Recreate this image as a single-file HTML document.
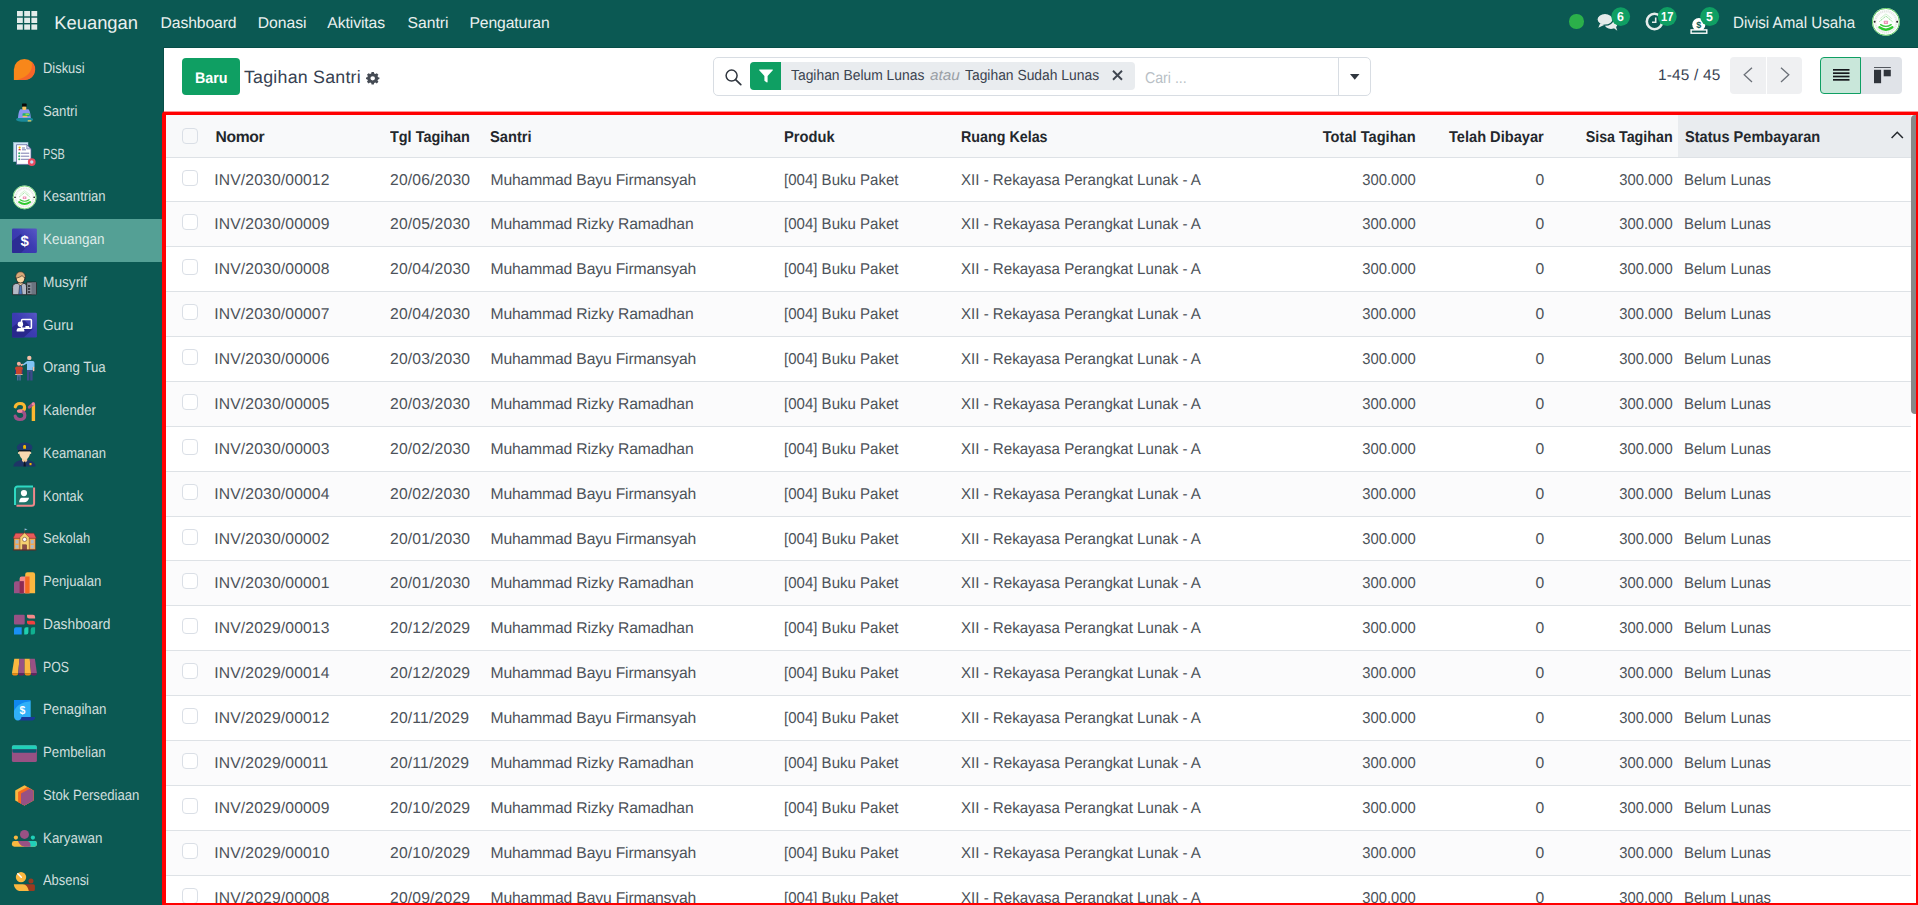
<!DOCTYPE html>
<html lang="id">
<head>
<meta charset="utf-8">
<title>Tagihan Santri - Keuangan</title>
<style>
*{box-sizing:border-box}
html,body{margin:0;padding:0}
body{width:1918px;height:905px;overflow:hidden;position:relative;background:#fff;font-family:"Liberation Sans",sans-serif;}
.t{position:absolute;white-space:nowrap;line-height:1;display:block;text-rendering:geometricPrecision}
.abs{position:absolute}
nav.top{position:absolute;left:0;top:0;width:1918px;height:48px;background:#0b5953}
.sidebg{position:absolute;left:0;top:48px;width:164px;height:857px;background:#0b5953;border-right:1px solid #074e48}
.act{position:absolute;left:0;top:219px;width:162px;height:43px;background:#54a095}
.mainbg{position:absolute;left:164px;top:48px;width:1754px;height:857px;background:#fff}
a{color:inherit;text-decoration:none}
.cb{position:absolute;left:182px;width:16px;height:16px;border:1px solid #dadfe6;border-radius:4px;background:#fff}
svg{position:absolute;overflow:visible}
</style>
</head>
<body>

<nav class="top">
<svg style="left:17px;top:11px" width="20" height="19" viewBox="0 0 20 19">
<rect x="0.0" y="0.0" width="5.8" height="5.3" fill="#e4ecea"/>
<rect x="7.2" y="0.0" width="5.8" height="5.3" fill="#e4ecea"/>
<rect x="14.4" y="0.0" width="5.8" height="5.3" fill="#e4ecea"/>
<rect x="0.0" y="6.7" width="5.8" height="5.3" fill="#e4ecea"/>
<rect x="7.2" y="6.7" width="5.8" height="5.3" fill="#e4ecea"/>
<rect x="14.4" y="6.7" width="5.8" height="5.3" fill="#e4ecea"/>
<rect x="0.0" y="13.4" width="5.8" height="5.3" fill="#e4ecea"/>
<rect x="7.2" y="13.4" width="5.8" height="5.3" fill="#e4ecea"/>
<rect x="14.4" y="13.4" width="5.8" height="5.3" fill="#e4ecea"/>
</svg>
<span class="t" id="brand" style="top:14.00px;font-size:18.4px;color:#e9f0ef;left:54.20px;">Keuangan</span>
<span class="t" id="menu0" style="top:16.00px;font-size:15.7px;color:#e9f0ef;letter-spacing:-0.100px;left:160.60px;">Dashboard</span>
<span class="t" id="menu1" style="top:16.00px;font-size:15.7px;color:#e9f0ef;left:257.70px;">Donasi</span>
<span class="t" id="menu2" style="top:16.00px;font-size:15.7px;color:#e9f0ef;letter-spacing:-0.075px;left:327.30px;">Aktivitas</span>
<span class="t" id="menu3" style="top:16.00px;font-size:15.7px;color:#e9f0ef;left:407.50px;">Santri</span>
<span class="t" id="menu4" style="top:16.00px;font-size:15.7px;color:#e9f0ef;letter-spacing:-0.111px;left:469.50px;">Pengaturan</span>
<div class="abs" style="left:1569px;top:14px;width:14.5px;height:14.5px;border-radius:50%;background:#2bb04a"></div>
<svg style="left:1590px;top:0" width="140" height="48" viewBox="1590 0 140 48">
<g fill="#e6eceb">
<ellipse cx="1611" cy="24.200" rx="6.400" ry="4.700"/><path d="M1613 27.600l4.300 3.100-1.400-4.200z"/>
<ellipse cx="1605" cy="19.300" rx="8.100" ry="5.900" stroke="#0b5953" stroke-width="1.300"/>
<path d="M1600.200 23.200l-1.900 4.600 6.400-3z"/>
</g>
<circle cx="1654.500" cy="21.500" r="7.700" fill="none" stroke="#e6eceb" stroke-width="2.600"/>
<path d="M1655.700 17.400v5.600M1652 22.300h4.500" fill="none" stroke="#e6eceb" stroke-width="1.600"/>
<circle cx="1698.800" cy="24.600" r="6.600" fill="#fff"/>
<rect x="1691.100" y="29.900" width="15.700" height="3.300" fill="#0b5953" stroke="#fff" stroke-width="1.400"/>
<g fill="#0f9f63"><circle cx="1620.700" cy="16.600" r="9.400"/><circle cx="1667.200" cy="16.600" r="9.500"/><circle cx="1709.700" cy="16.600" r="9.500"/></g>
</svg>
<span class="t" id="money_s" style="top:21.00px;font-size:9px;color:#0b5953;font-weight:700;left:1696.30px;">$</span>
<span class="t" id="b1t" style="top:10.00px;font-size:13px;color:#fff;font-weight:700;left:1617.00px;transform:scaleX(0.9500);transform-origin:0 0;">6</span>
<span class="t" id="b2t" style="top:10.00px;font-size:13px;color:#fff;font-weight:700;left:1660.60px;transform:scaleX(0.8600);transform-origin:0 0;">17</span>
<span class="t" id="b3t" style="top:10.00px;font-size:13px;color:#fff;font-weight:700;left:1706.20px;transform:scaleX(0.9500);transform-origin:0 0;">5</span>
<span class="t" id="user" style="top:15.00px;font-size:16.2px;color:#e9f0ef;left:1733.30px;transform:scaleX(0.9359);transform-origin:0 0;">Divisi Amal Usaha</span>
<svg style="left:1866px;top:0" width="44" height="48" viewBox="1866 0 44 48"><g transform="translate(1885.9 21.9) scale(1.0000)">
<circle r="13.900" fill="#fdfefd"/>
<circle r="13.500" fill="none" stroke="#52c852" stroke-width=".9"/>
<circle r="10.600" fill="none" stroke="#e4e6e4" stroke-width="2.200" stroke-dasharray="1.200 .7"/>
<path d="M-6.600 -.2L0 -5.800 6.600 -.2" fill="none" stroke="#8edc8e" stroke-width="1" stroke-dasharray="1.500 .6"/>
<path d="M-5.800 -3.300L0 -8 5.800 -3.300" fill="none" stroke="#c4ecc4" stroke-width=".8"/>
<rect x="-2.100" y="-1.200" width="4.200" height="3.200" rx=".5" fill="#ee92b6"/>
<rect x="-.5" y="-.2" width="1" height="1.300" fill="#fff"/>
<path d="M-5.300 2.700Q0 6.400 5.300 2.700" fill="none" stroke="#3cc83c" stroke-width="1.300" stroke-linecap="round"/>
<path d="M-6.500 5.400Q0 10.200 6.500 5.400" fill="none" stroke="#2ec82e" stroke-width="2.300" stroke-linecap="round"/>
<circle cx="-11.300" cy="-.2" r="1" fill="#222"/><circle cx="11.300" cy="-.2" r="1" fill="#222"/>
</g></svg>
<div class="abs" style="left:163px;top:47px;width:1755px;height:1px;background:#074e48"></div>
</nav>
<aside class="side">
<div class="sidebg"></div>
<div class="act"></div>
<ul style="list-style:none;margin:0;padding:0">
<li><a><svg style="left:12px;top:56.87px" width="25" height="25" viewBox="0 0 25 25"><path fill="#f8871a" d="M1.900 23V12.450A10.550 10.550 0 1 1 12.450 23z"/>
<path fill="#f5652a" d="M19.600 4.600Q22.300 18.300 5 22.900L12.450 23A10.550 10.550 0 0 0 19.600 4.600z"/></svg><span class="t" id="side0" style="top:62.00px;font-size:14.8px;color:rgba(255,255,255,.82);left:43.40px;transform:scaleX(0.8723);transform-origin:0 0;">Diskusi</span></a></li>
<li><a><svg style="left:12px;top:99.61px" width="25" height="25" viewBox="0 0 25 25"><ellipse cx="12.600" cy="19.500" rx="8.600" ry="2.300" fill="#1a8a9a"/>
<path fill="#8a96f0" d="M8.600 9.200h7.600c1.500.6 2.300 4.500 2.600 8.700H6c.3-4.200 1.100-8.100 2.600-8.700z"/>
<rect x="10.300" y="6.200" width="4" height="3.900" rx="1.300" fill="#f5c060"/>
<rect x="10" y="3.600" width="4.600" height="3" rx=".6" fill="#0a0a0a"/>
<rect x="10.500" y="13.300" width="7.300" height="3" rx=".8" fill="#20b070"/>
<rect x="13.500" y="13.600" width="3.500" height="1.200" fill="#b8e04a"/>
<rect x="10.500" y="15.800" width="5" height="1.500" rx=".7" fill="#f5c060"/>
<rect x="15.600" y="20.300" width="3.800" height="1.100" rx=".5" fill="#e8d060"/></svg><span class="t" id="side1" style="top:105.00px;font-size:14.8px;color:rgba(255,255,255,.82);left:43.40px;transform:scaleX(0.8895);transform-origin:0 0;">Santri</span></a></li>
<li><a><svg style="left:12px;top:142.35px" width="25" height="25" viewBox="0 0 25 25"><rect x="1.400" y=".3" width="14.600" height="19.400" fill="#cfe6f5" stroke="#9ab8d0" stroke-width=".5"/>
<path fill="#fff" stroke="#5a5a9a" stroke-width=".7" d="M4.500 2.700h10.300l4.200 4.200v15.500H4.500z"/>
<path fill="#d8dcf0" stroke="#5a5a9a" stroke-width=".6" d="M14.800 2.700v4.200H19z"/>
<circle cx="7.600" cy="5.600" r="1.100" fill="#f0b000"/><path d="M6.300 8.300c0-1.800 2.600-1.800 2.600 0z" fill="#c03050"/>
<path stroke="#5a5a9a" stroke-width=".8" d="M10 6h3M10 7.800h4M8.800 11.200h8.400M8.800 14.200h8.400M8.800 17.300h8.400"/>
<circle cx="7.200" cy="11.200" r="1" fill="#30b070"/><circle cx="7.200" cy="14.200" r="1" fill="#30b070"/><circle cx="7.200" cy="17.300" r="1" fill="#30b070"/>
<circle cx="19.750" cy="20.050" r="3.900" fill="#e84a5f"/><circle cx="19.750" cy="20.050" r="1.700" fill="#c8d8f0"/></svg><span class="t" id="side2" style="top:148.00px;font-size:14.8px;color:rgba(255,255,255,.82);left:43.40px;transform:scaleX(0.7389);transform-origin:0 0;">PSB</span></a></li>
<li><a><svg style="left:12px;top:185.09px" width="25" height="25" viewBox="0 0 25 25"><g transform="translate(12.6 12.4) scale(0.8489)">
<circle r="13.900" fill="#fdfefd"/>
<circle r="13.500" fill="none" stroke="#52c852" stroke-width=".9"/>
<circle r="10.600" fill="none" stroke="#e4e6e4" stroke-width="2.200" stroke-dasharray="1.200 .7"/>
<path d="M-6.600 -.2L0 -5.800 6.600 -.2" fill="none" stroke="#8edc8e" stroke-width="1" stroke-dasharray="1.500 .6"/>
<path d="M-5.800 -3.300L0 -8 5.800 -3.300" fill="none" stroke="#c4ecc4" stroke-width=".8"/>
<rect x="-2.100" y="-1.200" width="4.200" height="3.200" rx=".5" fill="#ee92b6"/>
<rect x="-.5" y="-.2" width="1" height="1.300" fill="#fff"/>
<path d="M-5.300 2.700Q0 6.400 5.300 2.700" fill="none" stroke="#3cc83c" stroke-width="1.300" stroke-linecap="round"/>
<path d="M-6.500 5.400Q0 10.200 6.500 5.400" fill="none" stroke="#2ec82e" stroke-width="2.300" stroke-linecap="round"/>
<circle cx="-11.300" cy="-.2" r="1" fill="#222"/><circle cx="11.300" cy="-.2" r="1" fill="#222"/>
</g></svg><span class="t" id="side3" style="top:190.00px;font-size:14.8px;color:rgba(255,255,255,.82);left:43.40px;transform:scaleX(0.8857);transform-origin:0 0;">Kesantrian</span></a></li>
<li><a><svg style="left:12px;top:227.83px" width="25" height="25" viewBox="0 0 25 25"><defs><linearGradient id="gq4" x1="1" y1="0" x2="0" y2="1"><stop offset="0" stop-color="#5858c6"/><stop offset=".45" stop-color="#3c3cb2"/><stop offset="1" stop-color="#3434a8"/></linearGradient></defs>
<rect x="0" y=".4" width="24.900" height="24.600" rx="1.200" fill="url(#gq4)"/><path d="M0 13l9-7 7.500 11L9 25H1.200A1.200 1.200 0 0 1 0 23.800z" fill="#2c2c94"/>
<text x="12.600" y="17.800" text-anchor="middle" font-family="Liberation Sans, sans-serif" font-weight="700" font-size="15" fill="#fff">$</text></svg><span class="t" id="side4" style="top:233.00px;font-size:14.8px;color:rgba(255,255,255,.82);left:43.40px;transform:scaleX(0.9107);transform-origin:0 0;">Keuangan</span></a></li>
<li><a><svg style="left:12px;top:270.57px" width="25" height="25" viewBox="0 0 25 25"><rect x="14.700" y="11.100" width="9.800" height="12.600" rx=".8" fill="#8a919c" stroke="#1c1c1c" stroke-width=".8"/>
<rect x="19.500" y="11.500" width="4.600" height="11.800" fill="#6c7480"/>
<rect x="16" y="14" width="2.200" height="2" fill="#3a3e46"/><rect x="16" y="17" width="2.200" height="2" fill="#3a3e46"/><rect x="16" y="20" width="2.200" height="2" fill="#3a3e46"/>
<path d="M.6 23.700v-7.500c0-2.500 1.800-3.700 4.500-3.900h6.800c1.800.2 2.600 1.400 2.600 3.900v7.500z" fill="#b4b9c6" stroke="#1c1c1c" stroke-width=".8"/>
<path d="M6 12.600l2.500 2.200 2.500-2.200v-1.500H6z" fill="#f3cf9c" stroke="#1c1c1c" stroke-width=".6"/>
<path d="M7.600 14.600h1.800l.9 8.800H6.700z" fill="#4a78c0" stroke="#1c1c1c" stroke-width=".5"/>
<ellipse cx="8.500" cy="7.300" rx="4.300" ry="4.700" fill="#f9d5a0" stroke="#1c1c1c" stroke-width=".8"/>
<path d="M3.700 7.200C3.300 2.600 6 .8 8.500.8s5.300 1.800 4.800 6.400c-1.400-.9-2.600-1.700-3.300-2.600C8.500 6 6 6.800 3.700 7.200z" fill="#d8a878" stroke="#1c1c1c" stroke-width=".6"/></svg><span class="t" id="side5" style="top:276.00px;font-size:14.8px;color:rgba(255,255,255,.82);left:43.40px;transform:scaleX(0.9250);transform-origin:0 0;">Musyrif</span></a></li>
<li><a><svg style="left:12px;top:313.31px" width="25" height="25" viewBox="0 0 25 25"><defs><linearGradient id="gq6" x1="1" y1="0" x2="0" y2="1"><stop offset="0" stop-color="#5858c6"/><stop offset=".45" stop-color="#3c3cb2"/><stop offset="1" stop-color="#3434a8"/></linearGradient></defs>
<rect x="0" y="-.2" width="24.900" height="24.600" rx="1.200" fill="url(#gq6)"/><path d="M0 14.500L11 5.500l9.500 10.800-8.800 8.300H1.200A1.200 1.200 0 0 1 0 23.400z" fill="#28288c"/>
<rect x="9.600" y="6.500" width="9.800" height="8.800" rx=".8" fill="none" stroke="#fff" stroke-width="1.500"/>
<rect x="13.400" y="13" width="3.800" height="2.300" fill="#fff"/>
<circle cx="8.400" cy="11.200" r="2.700" fill="#fff"/>
<path d="M4.700 18.500v-1.200c0-1.700 1.400-2.500 3.700-2.500s3.900.8 3.900 2.500v1.200z" fill="#fff"/></svg><span class="t" id="side6" style="top:319.00px;font-size:14.8px;color:rgba(255,255,255,.82);left:43.40px;transform:scaleX(0.9219);transform-origin:0 0;">Guru</span></a></li>
<li><a><svg style="left:12px;top:356.05px" width="25" height="25" viewBox="0 0 25 25"><circle cx="17.300" cy="1.900" r="2.200" fill="#f5c0a8"/>
<path d="M15 14.300V5h5.600c1.200 0 1.900.8 1.900 1.900v4.300h-1.700v3.100z" fill="#7fc4f5"/>
<path d="M15.200 5l-4.700 3.400.8 1.200 4.800-2.600z" fill="#7fc4f5"/>
<rect x="20.900" y="10.800" width="1.500" height="4.500" rx=".7" fill="#f5c0a8"/>
<path d="M15 14.300h5.600v10.300h-2.400v-8.500h-.8v8.500H15z" fill="#3e4a8a"/>
<circle cx="6.900" cy="7.800" r="2" fill="#f5b0a0"/>
<path d="M8.500 8.300l2.200-.5.500 1.200-2.200 1.300z" fill="#f5b0a0"/>
<rect x="3" y="10.400" width="7.800" height="7.500" rx="2" fill="#c8442e"/>
<rect x="3" y="13.500" width="1" height="4.500" fill="#2e3a7a"/><rect x="9.800" y="13.500" width="1" height="4.500" fill="#2e3a7a"/>
<rect x="3.200" y="18" width="7.400" height="1" fill="#e0b890"/>
<path d="M5 18.800h3.800v5.800H7.300v-4h-.8v4H5z" fill="#4a6a9a"/></svg><span class="t" id="side7" style="top:361.00px;font-size:14.8px;color:rgba(255,255,255,.82);left:43.40px;transform:scaleX(0.8957);transform-origin:0 0;">Orang Tua</span></a></li>
<li><a><svg style="left:12px;top:398.79px" width="25" height="25" viewBox="0 0 25 25"><path d="M3.300 7.800C3.900 5.200 5.700 4.500 8 4.500c3 0 4.600 1.700 4.600 4 0 2.200-1.700 3.600-4.200 3.600" fill="none" stroke="#fbb830" stroke-width="3.200" stroke-linecap="round"/>
<path d="M7.500 12.100c3.200 0 5.300 1.500 5.300 4.200 0 2.600-2 4.200-4.900 4.200-2.600 0-4.200-1.200-4.700-3.400" fill="none" stroke="#9c5188" stroke-width="3.200" stroke-linecap="round"/>
<path d="M6.500 12.100h2.500" stroke="#f08a98" stroke-width="3.200" stroke-linecap="round"/>
<path d="M21.400 4.800V22" stroke="#fbb830" stroke-width="3.400" stroke-linecap="butt"/>
<path d="M17.300 8.200l4.200-3.500" stroke="#9c5188" stroke-width="3" stroke-linecap="round"/>
<circle cx="21.300" cy="4.900" r="1.600" fill="#f08a98"/></svg><span class="t" id="side8" style="top:404.00px;font-size:14.8px;color:rgba(255,255,255,.82);left:43.40px;transform:scaleX(0.8932);transform-origin:0 0;">Kalender</span></a></li>
<li><a><svg style="left:12px;top:441.53px" width="25" height="25" viewBox="0 0 25 25"><path d="M1.400 24.400c.3-3.800 3.300-5.300 7.600-6.400h7.200c4.300 1.100 7 2.600 7.400 6.400z" fill="#1e3566"/>
<path d="M10 15.500h5.200V19l-2.600 2-2.600-2z" fill="#f3c998"/>
<path d="M12 19.500h1.300l.5 4.900h-2.300z" fill="#101828"/>
<rect x="17.500" y="21" width="2" height="2.200" fill="#f5b800"/>
<path d="M7 9c0 5 2.500 8.800 5.600 8.800S18.300 14 18.300 9z" fill="#f9d9b0"/>
<circle cx="6.900" cy="11" r="1" fill="#f9d9b0"/><circle cx="18.300" cy="11" r="1" fill="#f9d9b0"/>
<path d="M6.200 9.400h12.800v-1.300H6.200z" fill="#0a0a10"/>
<path d="M5 6.500C4 3.500 8 .5 12.600.5s8.600 3 7.600 6L19 8.300H6.200z" fill="#1e3a6e"/>
<path d="M11.200 6.800V4.300c0-1.700 2.800-1.700 2.800 0v2.500z" fill="#f5b800"/></svg><span class="t" id="side9" style="top:447.00px;font-size:14.8px;color:rgba(255,255,255,.82);left:43.40px;transform:scaleX(0.8818);transform-origin:0 0;">Keamanan</span></a></li>
<li><a><svg style="left:12px;top:484.27px" width="25" height="25" viewBox="0 0 25 25"><rect x="3" y="2.500" width="19.100" height="19.200" rx="2.500" fill="#1d7268"/>
<path d="M3 21V5a2.500 2.500 0 0 1 2.500-2.500H21" fill="none" stroke="#2ed9c3" stroke-width="2"/>
<path d="M22.100 3.500v15.700a2.500 2.500 0 0 1-2.500 2.500H4.500" fill="none" stroke="#f0878a" stroke-width="2"/>
<circle cx="11.950" cy="9.100" r="3.100" fill="#fff"/>
<path d="M9.500 13.700h7.600c-.5 2.500-2.300 4.500-5 4.500h-5c.3-2.500 1-4 2.400-4.500z" fill="#fff"/></svg><span class="t" id="side10" style="top:490.00px;font-size:14.8px;color:rgba(255,255,255,.82);left:43.40px;transform:scaleX(0.8743);transform-origin:0 0;">Kontak</span></a></li>
<li><a><svg style="left:12px;top:527.01px" width="25" height="25" viewBox="0 0 25 25"><path d="M12.500 1.500V6" stroke="#6a4a3a" stroke-width=".6"/><path d="M12.700 1.400l2.800.9-2.800 1.100z" fill="#8ac0e0"/>
<rect x="2" y="11" width="21.400" height="11.900" fill="#f0a850" stroke="#6a3a2a" stroke-width=".5"/>
<path d="M1.100 11.300l2.400-5.100h18.400l2.400 5.100z" fill="#e85a5a" stroke="#7a2a2a" stroke-width=".5"/>
<path d="M7.900 22.900V10.500l4.700-4.800 4.700 4.800v12.400z" fill="#f5d070" stroke="#6a3a2a" stroke-width=".5"/>
<circle cx="12.600" cy="12.400" r="2.100" fill="#fff" stroke="#6a3a2a" stroke-width=".6"/>
<rect x="10.500" y="17.800" width="4.200" height="5.100" fill="#8a4a4a" stroke="#5a2a2a" stroke-width=".4"/>
<rect x="3.500" y="13" width="3" height="3.600" fill="#a8b8c8"/><rect x="3.500" y="18" width="3" height="3.400" fill="#a8b8c8"/>
<rect x="18.700" y="13" width="3" height="3.600" fill="#a8b8c8"/><rect x="18.700" y="18" width="3" height="3.400" fill="#a8b8c8"/>
<path d="M.8 23h23.600" stroke="#5a2a2a" stroke-width=".9"/></svg><span class="t" id="side11" style="top:532.00px;font-size:14.8px;color:rgba(255,255,255,.82);left:43.40px;transform:scaleX(0.8830);transform-origin:0 0;">Sekolah</span></a></li>
<li><a><svg style="left:12px;top:569.75px" width="25" height="25" viewBox="0 0 25 25"><path d="M13.200 23.250V4.500a2.200 2.200 0 0 1 2.200-2.250h5.500a2.200 2.200 0 0 1 2.200 2.200v18.800z" fill="#fbb840"/>
<path d="M7.600 23.250V8.700a2.100 2.100 0 0 1 2.100-2.150h7.800v16.700z" fill="#f58a8a"/>
<path d="M13.200 6.550h4.300v16.700h-4.300z" fill="#f56a20"/>
<path d="M2 23.250V13.400a2.100 2.100 0 0 1 2.100-2.150h7.700v12z" fill="#985184"/>
<path d="M7.600 11.250h4.200v12H7.600z" fill="#8e2a52"/></svg><span class="t" id="side12" style="top:575.00px;font-size:14.8px;color:rgba(255,255,255,.82);left:43.40px;transform:scaleX(0.8877);transform-origin:0 0;">Penjualan</span></a></li>
<li><a><svg style="left:12px;top:612.49px" width="25" height="25" viewBox="0 0 25 25"><rect x="2" y="2.800" width="10.700" height="9.700" rx="1" fill="#985184"/>
<path d="M15 2.800h6a2.100 2.100 0 0 1 2.100 2.100v1.600h-6A2.100 2.100 0 0 1 15 4.400z" fill="#f58a8a"/>
<path d="M15 8.650h6a2.100 2.100 0 0 1 2.100 2.100v1.750h-6A2.100 2.100 0 0 1 15 10.400z" fill="#f04040"/>
<path d="M2 17.300a2 2 0 0 1 2-2h5.700v7.200H2z" fill="#1a90f5"/>
<path d="M12.200 22.500v-5a2.200 2.200 0 0 1 2.200-2.200h2v5a2.200 2.200 0 0 1-2.200 2.200z" fill="#20d0b0"/>
<path d="M18.700 22.500v-5a2.200 2.200 0 0 1 2.200-2.200h2.200v5a2.200 2.200 0 0 1-2.200 2.200z" fill="#10b090"/></svg><span class="t" id="side13" style="top:618.00px;font-size:14.8px;color:rgba(255,255,255,.82);left:43.40px;transform:scaleX(0.9310);transform-origin:0 0;">Dashboard</span></a></li>
<li><a><svg style="left:12px;top:655.23px" width="25" height="25" viewBox="0 0 25 25"><path d="M2.300 3.700h5.150L6.200 18.200H-.1z" fill="#fbb840"/><path d="M7.450 3.700h5.150v14.500H6.200z" fill="#985184"/>
<path d="M12.600 3.700h5.150L19 18.200h-6.400z" fill="#fbb840"/><path d="M17.750 3.700h5.150l2 14.500H19z" fill="#985184"/>
<path d="M-.1 18.200h6.300a3.150 2.300 0 0 1-6.300 0z" fill="#f58a10"/><path d="M6.200 18.200h6.400a3.200 2.300 0 0 1-6.400 0z" fill="#6a2060"/>
<path d="M12.600 18.200H19a3.200 2.300 0 0 1-6.400 0z" fill="#f58a10"/><path d="M19 18.200h5.900a2.950 2.300 0 0 1-5.900 0z" fill="#6a2060"/></svg><span class="t" id="side14" style="top:661.00px;font-size:14.8px;color:rgba(255,255,255,.82);left:43.40px;transform:scaleX(0.8290);transform-origin:0 0;">POS</span></a></li>
<li><a><svg style="left:12px;top:697.97px" width="25" height="25" viewBox="0 0 25 25"><path d="M9 19h14.100c0 2-1.200 3.600-3 3.600H6z" fill="#1a3a9a"/>
<path d="M2 2h15.200a1.500 1.500 0 0 1 1.500 1.500V19H9.500c-.3 2.200-1.700 3.600-3.700 3.600-2.200 0-3.800-1.700-3.800-4z" fill="#30b0f8"/>
<path d="M2 2h15.200a1.500 1.500 0 0 1 1.500 1.300C10 4 4 8 2 13z" fill="#1088f0"/>
<text x="10.400" y="16.300" text-anchor="middle" font-family="Liberation Sans, sans-serif" font-weight="700" font-size="10.500" fill="#fff">$</text></svg><span class="t" id="side15" style="top:703.00px;font-size:14.8px;color:rgba(255,255,255,.82);left:43.40px;transform:scaleX(0.8971);transform-origin:0 0;">Penagihan</span></a></li>
<li><a><svg style="left:12px;top:740.71px" width="25" height="25" viewBox="0 0 25 25"><rect x="-.1" y="4.300" width="25" height="16.700" rx="1.600" fill="#985184"/>
<path d="M-.1 8.300V5.900a1.600 1.600 0 0 1 1.600-1.600h21.800a1.600 1.600 0 0 1 1.600 1.600v2.400z" fill="#20d0b8"/>
<path d="M.4 8.300h24v2a1.500 1.500 0 0 1-1.500 1.500H1.900a1.500 1.500 0 0 1-1.500-1.500z" fill="#0a5a70"/></svg><span class="t" id="side16" style="top:746.00px;font-size:14.8px;color:rgba(255,255,255,.82);left:43.40px;transform:scaleX(0.8957);transform-origin:0 0;">Pembelian</span></a></li>
<li><a><svg style="left:12px;top:783.45px" width="25" height="25" viewBox="0 0 25 25"><path d="M12.500 2.350l9 5.200v10l-9 5-9.300-5v-10z" fill="#fbb840"/>
<path d="M6.100 9l9.300-5 6.100 3.550v10l-9 5-6.400-3.400z" fill="#f56a20"/>
<path d="M9 10.550l8.800-4.800 3.700 2v9.800l-9 5-3.500-1.900z" fill="#985184"/></svg><span class="t" id="side17" style="top:789.00px;font-size:14.8px;color:rgba(255,255,255,.82);left:43.40px;transform:scaleX(0.8870);transform-origin:0 0;">Stok Persediaan</span></a></li>
<li><a><svg style="left:12px;top:826.19px" width="25" height="25" viewBox="0 0 25 25"><circle cx="12.500" cy="8.400" r="4.500" fill="#985184"/>
<circle cx="3.900" cy="11.600" r="2.100" fill="#fbb840"/><circle cx="20.900" cy="11.600" r="2.100" fill="#20d0b8"/>
<rect x="-.1" y="15.100" width="25" height="5.600" rx="2.400" fill="#fbb840"/>
<path d="M14 15.100h8.500a2.400 2.400 0 0 1 2.400 2.400v.8a2.400 2.400 0 0 1-2.400 2.400H16z" fill="#20d0b8"/>
<path d="M6 15.100h9.500c2.500.3 3.200 3 3 5.600h-6C8.500 20.400 7 17.500 6 15.100z" fill="#985184"/></svg><span class="t" id="side18" style="top:832.00px;font-size:14.8px;color:rgba(255,255,255,.82);left:43.40px;transform:scaleX(0.9031);transform-origin:0 0;">Karyawan</span></a></li>
<li><a><svg style="left:12px;top:868.93px" width="25" height="25" viewBox="0 0 25 25"><circle cx="9" cy="8.100" r="5.200" fill="#fbb840"/>
<path d="M5.800 4.700l3.500 3.600" stroke="#fff" stroke-width="1.500" stroke-linecap="round"/>
<circle cx="18.950" cy="11.900" r="2.500" fill="#9a3a20"/>
<path d="M12 15.200h9.400a1.500 1.500 0 0 1 1.500 1.500v3.800a1.500 1.500 0 0 1-1.500 1.500H14z" fill="#9a3a20"/>
<path d="M1.850 15.200H11c3 .2 5 3 5.800 6.800H8.500c-3.700 0-6.300-3-6.650-6.800z" fill="#fbb840"/></svg><span class="t" id="side19" style="top:874.00px;font-size:14.8px;color:rgba(255,255,255,.82);left:43.40px;transform:scaleX(0.8736);transform-origin:0 0;">Absensi</span></a></li>
</ul>
</aside>
<main>
<div class="mainbg"></div>
<header class="control-panel">
<div class="abs" style="left:182px;top:58px;width:58px;height:37px;border-radius:4px;background:#0f9f63"></div>
<span class="t" id="baru" style="top:71.00px;font-size:15.2px;color:#fff;font-weight:700;left:195.00px;transform:scaleX(0.9412);transform-origin:0 0;">Baru</span>
<span class="t" id="title" style="top:69.00px;font-size:17.8px;color:#374151;letter-spacing:0.231px;left:244.00px;">Tagihan Santri</span>
<svg style="left:366px;top:71.500px" width="13.400" height="12.600" viewBox="0 0 14 14" preserveAspectRatio="none">
<path fill="#454b54" fill-rule="evenodd" d="M5.800 0h2.400l.35 1.750c.45.150.85.350 1.250.6l1.500-1 1.700 1.700-1 1.500c.25.4.45.8.6 1.250L14 6.150v1.700l-1.400.35c-.15.450-.35.850-.6 1.250l1 1.500-1.700 1.700-1.500-1c-.4.250-.8.450-1.250.6L8.200 14H5.800l-.350-1.750c-.450-.150-.850-.350-1.250-.6l-1.500 1L1 10.950l1-1.500c-.250-.4-.450-.8-.6-1.250L0 7.850v-1.700l1.400-.350c.150-.450.350-.850.600-1.250l-1-1.500L2.700 1.350l1.500 1c.4-.250.800-.450 1.250-.6zM7 4.600a2.400 2.400 0 1 0 0 4.800 2.400 2.400 0 0 0 0-4.800z"/>
</svg>
<div class="abs" style="left:713px;top:57px;width:658px;height:38.500px;border:1px solid #d8dde3;border-radius:5px;background:#fff"></div>
<div class="abs" style="left:1338px;top:58px;width:1px;height:36.500px;background:#d8dde3"></div>
<svg style="left:725px;top:68.500px" width="17" height="16" viewBox="0 0 17 16">
<circle cx="6.600" cy="6.600" r="5.500" fill="none" stroke="#30363f" stroke-width="1.500"/>
<path d="M10.600 10.700l5.200 5" stroke="#30363f" stroke-width="1.700" stroke-linecap="round"/>
</svg>
<div class="abs" style="left:750px;top:62px;width:385px;height:28px;border-radius:4px;background:#e9ecef"></div>
<div class="abs" style="left:750px;top:62px;width:31px;height:28px;border-radius:4px 0 0 4px;background:#0f9f63"></div>
<svg style="left:758.500px;top:69px" width="14" height="14" viewBox="0 0 14 14">
<path fill="#fff" d="M.5.500h13c.4 0 .6.500.3.800L8.600 6.900v6.200c0 .4-.4.600-.7.400L5.700 12c-.2-.1-.3-.3-.3-.5V6.900L.2 1.300C-.1 1 .1.500.5.500z"/>
</svg>
<span class="t" id="f1" style="top:69.00px;font-size:14.7px;color:#3b4350;left:791.40px;transform:scaleX(0.9441);transform-origin:0 0;">Tagihan Belum Lunas</span>
<span class="t" id="f2" style="top:69.00px;font-size:14.7px;color:#9aa0a6;font-style:italic;left:929.80px;transform:scaleX(1.0460);transform-origin:0 0;">atau</span>
<span class="t" id="f3" style="top:69.00px;font-size:14.7px;color:#3b4350;left:965.00px;transform:scaleX(0.9437);transform-origin:0 0;">Tagihan Sudah Lunas</span>
<svg style="left:1112.200px;top:70.300px" width="11" height="10.500" viewBox="0 0 11 10.500">
<path d="M1 .8l9 8.900M10 .8L1 9.700" stroke="#3f4650" stroke-width="1.900" fill="none"/>
</svg>
<span class="t" id="cari" style="top:71.00px;font-size:15.7px;color:#b9bfc6;left:1144.80px;transform:scaleX(0.9022);transform-origin:0 0;">Cari ...</span>
<svg style="left:1350px;top:73.800px" width="9.500" height="5.700" viewBox="0 0 9.500 5.700"><path d="M0 0h9.500L4.750 5.700z" fill="#30363f"/></svg>
<span class="t" id="pager" style="top:68.00px;font-size:15.4px;color:#374151;letter-spacing:0.200px;left:1658.00px;">1-45 / 45</span>
<div class="abs" style="left:1730px;top:57px;width:36px;height:36.500px;border-radius:4px 0 0 4px;background:#eff0f2"></div>
<div class="abs" style="left:1767px;top:57px;width:35px;height:36.500px;border-radius:0 4px 4px 0;background:#eff0f2"></div>
<svg style="left:1743px;top:66.500px" width="10" height="16" viewBox="0 0 10 16"><path d="M9 .7L1.200 7.700 9 15" fill="none" stroke="#6b7078" stroke-width="1.300"/></svg>
<svg style="left:1780px;top:66.500px" width="10" height="16" viewBox="0 0 10 16"><path d="M1 .7l7.800 7L1 15" fill="none" stroke="#6b7078" stroke-width="1.300"/></svg>
<div class="abs" style="left:1820px;top:57px;width:41px;height:36.500px;border-radius:4px 0 0 4px;background:#c9e7da;border:1px solid #0f9f63"></div>
<div class="abs" style="left:1861px;top:57px;width:41px;height:36.500px;border-radius:0 4px 4px 0;background:#e0e3e8"></div>
<svg style="left:1832.500px;top:69px" width="16.500" height="12" viewBox="0 0 16.500 12"><rect x="0" y="0.00" width="16.500" height="1.700" fill="#15181c"/><rect x="0" y="3.33" width="16.500" height="1.700" fill="#15181c"/><rect x="0" y="6.66" width="16.500" height="1.700" fill="#15181c"/><rect x="0" y="9.99" width="16.500" height="1.700" fill="#15181c"/></svg>
<svg style="left:1873.500px;top:66.800px" width="17" height="16.500" viewBox="0 0 17 16.500">
<rect x="0" y="0" width="16.800" height=".8" fill="#30343b"/>
<rect x="0" y="2.800" width="7.100" height="13.400" fill="#30343b"/>
<rect x="9.700" y="2.800" width="7.100" height="6.500" fill="#30343b"/>
</svg>
</header>
<section class="list">
<div class="thead">
<div class="abs" style="left:166px;top:115px;width:1745px;height:42px;background:#f8f9fa"></div>
<div class="abs" style="left:1678px;top:115px;width:233px;height:42px;background:#e9ecef"></div>
<div class="abs" style="left:166px;top:157px;width:1745px;height:1px;background:#dee2e6"></div>
<div class="cb" style="top:128px;background:transparent"></div>
<span class="t" id="hNomor" style="top:130.00px;font-size:15.7px;color:#24282d;font-weight:700;letter-spacing:-0.375px;left:215.50px;">Nomor</span>
<span class="t" id="hTgl" style="top:130.00px;font-size:15.7px;color:#24282d;font-weight:700;left:390.00px;transform:scaleX(0.9195);transform-origin:0 0;">Tgl Tagihan</span>
<span class="t" id="hSantri" style="top:130.00px;font-size:15.7px;color:#24282d;font-weight:700;left:490.00px;transform:scaleX(0.9364);transform-origin:0 0;">Santri</span>
<span class="t" id="hProduk" style="top:130.00px;font-size:15.7px;color:#24282d;font-weight:700;left:783.80px;transform:scaleX(0.9389);transform-origin:0 0;">Produk</span>
<span class="t" id="hRuang" style="top:130.00px;font-size:15.7px;color:#24282d;font-weight:700;left:961.00px;transform:scaleX(0.9105);transform-origin:0 0;">Ruang Kelas</span>
<span class="t" id="hTotal" style="top:130.00px;font-size:15.7px;color:#24282d;font-weight:700;right:502.20px;transform:scaleX(0.9320);transform-origin:100% 0;">Total Tagihan</span>
<span class="t" id="hTelah" style="top:130.00px;font-size:15.7px;color:#24282d;font-weight:700;right:374.30px;transform:scaleX(0.9314);transform-origin:100% 0;">Telah Dibayar</span>
<span class="t" id="hSisa" style="top:130.00px;font-size:15.7px;color:#24282d;font-weight:700;right:245.00px;transform:scaleX(0.9094);transform-origin:100% 0;">Sisa Tagihan</span>
<span class="t" id="hStatus" style="top:130.00px;font-size:15.7px;color:#24282d;font-weight:700;left:1684.50px;transform:scaleX(0.9288);transform-origin:0 0;">Status Pembayaran</span>
<svg style="left:1891px;top:131px" width="12.500" height="7.500" viewBox="0 0 12.500 7.500"><path d="M.6 7L6.250 1.200 11.900 7" fill="none" stroke="#24282d" stroke-width="1.500"/></svg>
</div>
<div class="tr">
<div class="abs" style="left:166px;top:158px;width:1745px;height:43px;background:#fff"></div>
<div class="abs" style="left:166px;top:201px;width:1745px;height:1px;background:#dee2e6"></div>
<div class="cb" style="top:170px"></div>
<span class="t" id="r0inv" style="top:173.00px;font-size:15.7px;color:#4c5259;letter-spacing:0.135px;left:214.30px;">INV/2030/00012</span>
<span class="t" id="r0dt" style="top:173.00px;font-size:15.7px;color:#4c5259;letter-spacing:0.167px;left:390.00px;">20/06/2030</span>
<span class="t" id="r0nm" style="top:173.00px;font-size:15.7px;color:#4c5259;letter-spacing:-0.152px;left:490.50px;">Muhammad Bayu Firmansyah</span>
<span class="t" id="r0pr" style="top:173.00px;font-size:15.7px;color:#4c5259;left:783.80px;transform:scaleX(0.9583);transform-origin:0 0;">[004] Buku Paket</span>
<span class="t" id="r0rk" style="top:173.00px;font-size:15.7px;color:#4c5259;left:960.50px;transform:scaleX(0.9618);transform-origin:0 0;">XII - Rekayasa Perangkat Lunak - A</span>
<span class="t" id="r0tt" style="top:173.00px;font-size:15.7px;color:#4c5259;right:502.60px;transform:scaleX(0.9430);transform-origin:100% 0;">300.000</span>
<span class="t" id="r0td" style="top:173.00px;font-size:15.7px;color:#4c5259;right:373.80px;">0</span>
<span class="t" id="r0st" style="top:173.00px;font-size:15.7px;color:#4c5259;right:245.00px;transform:scaleX(0.9430);transform-origin:100% 0;">300.000</span>
<span class="t" id="r0sp" style="top:173.00px;font-size:15.7px;color:#4c5259;left:1683.60px;transform:scaleX(0.9505);transform-origin:0 0;">Belum Lunas</span>
</div>
<div class="tr">
<div class="abs" style="left:166px;top:202px;width:1745px;height:44px;background:#fbfbfc"></div>
<div class="abs" style="left:166px;top:246px;width:1745px;height:1px;background:#dee2e6"></div>
<div class="cb" style="top:214px"></div>
<span class="t" id="r1inv" style="top:217.00px;font-size:15.7px;color:#4c5259;letter-spacing:0.135px;left:214.30px;">INV/2030/00009</span>
<span class="t" id="r1dt" style="top:217.00px;font-size:15.7px;color:#4c5259;letter-spacing:0.167px;left:390.00px;">20/05/2030</span>
<span class="t" id="r1nm" style="top:217.00px;font-size:15.7px;color:#4c5259;letter-spacing:-0.159px;left:490.50px;">Muhammad Rizky Ramadhan</span>
<span class="t" id="r1pr" style="top:217.00px;font-size:15.7px;color:#4c5259;left:783.80px;transform:scaleX(0.9583);transform-origin:0 0;">[004] Buku Paket</span>
<span class="t" id="r1rk" style="top:217.00px;font-size:15.7px;color:#4c5259;left:960.50px;transform:scaleX(0.9618);transform-origin:0 0;">XII - Rekayasa Perangkat Lunak - A</span>
<span class="t" id="r1tt" style="top:217.00px;font-size:15.7px;color:#4c5259;right:502.60px;transform:scaleX(0.9430);transform-origin:100% 0;">300.000</span>
<span class="t" id="r1td" style="top:217.00px;font-size:15.7px;color:#4c5259;right:373.80px;">0</span>
<span class="t" id="r1st" style="top:217.00px;font-size:15.7px;color:#4c5259;right:245.00px;transform:scaleX(0.9430);transform-origin:100% 0;">300.000</span>
<span class="t" id="r1sp" style="top:217.00px;font-size:15.7px;color:#4c5259;left:1683.60px;transform:scaleX(0.9505);transform-origin:0 0;">Belum Lunas</span>
</div>
<div class="tr">
<div class="abs" style="left:166px;top:247px;width:1745px;height:44px;background:#fff"></div>
<div class="abs" style="left:166px;top:291px;width:1745px;height:1px;background:#dee2e6"></div>
<div class="cb" style="top:259px"></div>
<span class="t" id="r2inv" style="top:262.00px;font-size:15.7px;color:#4c5259;letter-spacing:0.135px;left:214.30px;">INV/2030/00008</span>
<span class="t" id="r2dt" style="top:262.00px;font-size:15.7px;color:#4c5259;letter-spacing:0.167px;left:390.00px;">20/04/2030</span>
<span class="t" id="r2nm" style="top:262.00px;font-size:15.7px;color:#4c5259;letter-spacing:-0.152px;left:490.50px;">Muhammad Bayu Firmansyah</span>
<span class="t" id="r2pr" style="top:262.00px;font-size:15.7px;color:#4c5259;left:783.80px;transform:scaleX(0.9583);transform-origin:0 0;">[004] Buku Paket</span>
<span class="t" id="r2rk" style="top:262.00px;font-size:15.7px;color:#4c5259;left:960.50px;transform:scaleX(0.9618);transform-origin:0 0;">XII - Rekayasa Perangkat Lunak - A</span>
<span class="t" id="r2tt" style="top:262.00px;font-size:15.7px;color:#4c5259;right:502.60px;transform:scaleX(0.9430);transform-origin:100% 0;">300.000</span>
<span class="t" id="r2td" style="top:262.00px;font-size:15.7px;color:#4c5259;right:373.80px;">0</span>
<span class="t" id="r2st" style="top:262.00px;font-size:15.7px;color:#4c5259;right:245.00px;transform:scaleX(0.9430);transform-origin:100% 0;">300.000</span>
<span class="t" id="r2sp" style="top:262.00px;font-size:15.7px;color:#4c5259;left:1683.60px;transform:scaleX(0.9505);transform-origin:0 0;">Belum Lunas</span>
</div>
<div class="tr">
<div class="abs" style="left:166px;top:292px;width:1745px;height:44px;background:#fbfbfc"></div>
<div class="abs" style="left:166px;top:336px;width:1745px;height:1px;background:#dee2e6"></div>
<div class="cb" style="top:304px"></div>
<span class="t" id="r3inv" style="top:307.00px;font-size:15.7px;color:#4c5259;letter-spacing:0.135px;left:214.30px;">INV/2030/00007</span>
<span class="t" id="r3dt" style="top:307.00px;font-size:15.7px;color:#4c5259;letter-spacing:0.167px;left:390.00px;">20/04/2030</span>
<span class="t" id="r3nm" style="top:307.00px;font-size:15.7px;color:#4c5259;letter-spacing:-0.159px;left:490.50px;">Muhammad Rizky Ramadhan</span>
<span class="t" id="r3pr" style="top:307.00px;font-size:15.7px;color:#4c5259;left:783.80px;transform:scaleX(0.9583);transform-origin:0 0;">[004] Buku Paket</span>
<span class="t" id="r3rk" style="top:307.00px;font-size:15.7px;color:#4c5259;left:960.50px;transform:scaleX(0.9618);transform-origin:0 0;">XII - Rekayasa Perangkat Lunak - A</span>
<span class="t" id="r3tt" style="top:307.00px;font-size:15.7px;color:#4c5259;right:502.60px;transform:scaleX(0.9430);transform-origin:100% 0;">300.000</span>
<span class="t" id="r3td" style="top:307.00px;font-size:15.7px;color:#4c5259;right:373.80px;">0</span>
<span class="t" id="r3st" style="top:307.00px;font-size:15.7px;color:#4c5259;right:245.00px;transform:scaleX(0.9430);transform-origin:100% 0;">300.000</span>
<span class="t" id="r3sp" style="top:307.00px;font-size:15.7px;color:#4c5259;left:1683.60px;transform:scaleX(0.9505);transform-origin:0 0;">Belum Lunas</span>
</div>
<div class="tr">
<div class="abs" style="left:166px;top:337px;width:1745px;height:44px;background:#fff"></div>
<div class="abs" style="left:166px;top:381px;width:1745px;height:1px;background:#dee2e6"></div>
<div class="cb" style="top:349px"></div>
<span class="t" id="r4inv" style="top:352.00px;font-size:15.7px;color:#4c5259;letter-spacing:0.135px;left:214.30px;">INV/2030/00006</span>
<span class="t" id="r4dt" style="top:352.00px;font-size:15.7px;color:#4c5259;letter-spacing:0.167px;left:390.00px;">20/03/2030</span>
<span class="t" id="r4nm" style="top:352.00px;font-size:15.7px;color:#4c5259;letter-spacing:-0.152px;left:490.50px;">Muhammad Bayu Firmansyah</span>
<span class="t" id="r4pr" style="top:352.00px;font-size:15.7px;color:#4c5259;left:783.80px;transform:scaleX(0.9583);transform-origin:0 0;">[004] Buku Paket</span>
<span class="t" id="r4rk" style="top:352.00px;font-size:15.7px;color:#4c5259;left:960.50px;transform:scaleX(0.9618);transform-origin:0 0;">XII - Rekayasa Perangkat Lunak - A</span>
<span class="t" id="r4tt" style="top:352.00px;font-size:15.7px;color:#4c5259;right:502.60px;transform:scaleX(0.9430);transform-origin:100% 0;">300.000</span>
<span class="t" id="r4td" style="top:352.00px;font-size:15.7px;color:#4c5259;right:373.80px;">0</span>
<span class="t" id="r4st" style="top:352.00px;font-size:15.7px;color:#4c5259;right:245.00px;transform:scaleX(0.9430);transform-origin:100% 0;">300.000</span>
<span class="t" id="r4sp" style="top:352.00px;font-size:15.7px;color:#4c5259;left:1683.60px;transform:scaleX(0.9505);transform-origin:0 0;">Belum Lunas</span>
</div>
<div class="tr">
<div class="abs" style="left:166px;top:382px;width:1745px;height:44px;background:#fbfbfc"></div>
<div class="abs" style="left:166px;top:426px;width:1745px;height:1px;background:#dee2e6"></div>
<div class="cb" style="top:394px"></div>
<span class="t" id="r5inv" style="top:397.00px;font-size:15.7px;color:#4c5259;letter-spacing:0.135px;left:214.30px;">INV/2030/00005</span>
<span class="t" id="r5dt" style="top:397.00px;font-size:15.7px;color:#4c5259;letter-spacing:0.167px;left:390.00px;">20/03/2030</span>
<span class="t" id="r5nm" style="top:397.00px;font-size:15.7px;color:#4c5259;letter-spacing:-0.159px;left:490.50px;">Muhammad Rizky Ramadhan</span>
<span class="t" id="r5pr" style="top:397.00px;font-size:15.7px;color:#4c5259;left:783.80px;transform:scaleX(0.9583);transform-origin:0 0;">[004] Buku Paket</span>
<span class="t" id="r5rk" style="top:397.00px;font-size:15.7px;color:#4c5259;left:960.50px;transform:scaleX(0.9618);transform-origin:0 0;">XII - Rekayasa Perangkat Lunak - A</span>
<span class="t" id="r5tt" style="top:397.00px;font-size:15.7px;color:#4c5259;right:502.60px;transform:scaleX(0.9430);transform-origin:100% 0;">300.000</span>
<span class="t" id="r5td" style="top:397.00px;font-size:15.7px;color:#4c5259;right:373.80px;">0</span>
<span class="t" id="r5st" style="top:397.00px;font-size:15.7px;color:#4c5259;right:245.00px;transform:scaleX(0.9430);transform-origin:100% 0;">300.000</span>
<span class="t" id="r5sp" style="top:397.00px;font-size:15.7px;color:#4c5259;left:1683.60px;transform:scaleX(0.9505);transform-origin:0 0;">Belum Lunas</span>
</div>
<div class="tr">
<div class="abs" style="left:166px;top:427px;width:1745px;height:44px;background:#fff"></div>
<div class="abs" style="left:166px;top:471px;width:1745px;height:1px;background:#dee2e6"></div>
<div class="cb" style="top:439px"></div>
<span class="t" id="r6inv" style="top:442.00px;font-size:15.7px;color:#4c5259;letter-spacing:0.135px;left:214.30px;">INV/2030/00003</span>
<span class="t" id="r6dt" style="top:442.00px;font-size:15.7px;color:#4c5259;letter-spacing:0.167px;left:390.00px;">20/02/2030</span>
<span class="t" id="r6nm" style="top:442.00px;font-size:15.7px;color:#4c5259;letter-spacing:-0.159px;left:490.50px;">Muhammad Rizky Ramadhan</span>
<span class="t" id="r6pr" style="top:442.00px;font-size:15.7px;color:#4c5259;left:783.80px;transform:scaleX(0.9583);transform-origin:0 0;">[004] Buku Paket</span>
<span class="t" id="r6rk" style="top:442.00px;font-size:15.7px;color:#4c5259;left:960.50px;transform:scaleX(0.9618);transform-origin:0 0;">XII - Rekayasa Perangkat Lunak - A</span>
<span class="t" id="r6tt" style="top:442.00px;font-size:15.7px;color:#4c5259;right:502.60px;transform:scaleX(0.9430);transform-origin:100% 0;">300.000</span>
<span class="t" id="r6td" style="top:442.00px;font-size:15.7px;color:#4c5259;right:373.80px;">0</span>
<span class="t" id="r6st" style="top:442.00px;font-size:15.7px;color:#4c5259;right:245.00px;transform:scaleX(0.9430);transform-origin:100% 0;">300.000</span>
<span class="t" id="r6sp" style="top:442.00px;font-size:15.7px;color:#4c5259;left:1683.60px;transform:scaleX(0.9505);transform-origin:0 0;">Belum Lunas</span>
</div>
<div class="tr">
<div class="abs" style="left:166px;top:472px;width:1745px;height:44px;background:#fbfbfc"></div>
<div class="abs" style="left:166px;top:516px;width:1745px;height:1px;background:#dee2e6"></div>
<div class="cb" style="top:484px"></div>
<span class="t" id="r7inv" style="top:487.00px;font-size:15.7px;color:#4c5259;letter-spacing:0.135px;left:214.30px;">INV/2030/00004</span>
<span class="t" id="r7dt" style="top:487.00px;font-size:15.7px;color:#4c5259;letter-spacing:0.167px;left:390.00px;">20/02/2030</span>
<span class="t" id="r7nm" style="top:487.00px;font-size:15.7px;color:#4c5259;letter-spacing:-0.152px;left:490.50px;">Muhammad Bayu Firmansyah</span>
<span class="t" id="r7pr" style="top:487.00px;font-size:15.7px;color:#4c5259;left:783.80px;transform:scaleX(0.9583);transform-origin:0 0;">[004] Buku Paket</span>
<span class="t" id="r7rk" style="top:487.00px;font-size:15.7px;color:#4c5259;left:960.50px;transform:scaleX(0.9618);transform-origin:0 0;">XII - Rekayasa Perangkat Lunak - A</span>
<span class="t" id="r7tt" style="top:487.00px;font-size:15.7px;color:#4c5259;right:502.60px;transform:scaleX(0.9430);transform-origin:100% 0;">300.000</span>
<span class="t" id="r7td" style="top:487.00px;font-size:15.7px;color:#4c5259;right:373.80px;">0</span>
<span class="t" id="r7st" style="top:487.00px;font-size:15.7px;color:#4c5259;right:245.00px;transform:scaleX(0.9430);transform-origin:100% 0;">300.000</span>
<span class="t" id="r7sp" style="top:487.00px;font-size:15.7px;color:#4c5259;left:1683.60px;transform:scaleX(0.9505);transform-origin:0 0;">Belum Lunas</span>
</div>
<div class="tr">
<div class="abs" style="left:166px;top:517px;width:1745px;height:43px;background:#fff"></div>
<div class="abs" style="left:166px;top:560px;width:1745px;height:1px;background:#dee2e6"></div>
<div class="cb" style="top:529px"></div>
<span class="t" id="r8inv" style="top:532.00px;font-size:15.7px;color:#4c5259;letter-spacing:0.135px;left:214.30px;">INV/2030/00002</span>
<span class="t" id="r8dt" style="top:532.00px;font-size:15.7px;color:#4c5259;letter-spacing:0.167px;left:390.00px;">20/01/2030</span>
<span class="t" id="r8nm" style="top:532.00px;font-size:15.7px;color:#4c5259;letter-spacing:-0.152px;left:490.50px;">Muhammad Bayu Firmansyah</span>
<span class="t" id="r8pr" style="top:532.00px;font-size:15.7px;color:#4c5259;left:783.80px;transform:scaleX(0.9583);transform-origin:0 0;">[004] Buku Paket</span>
<span class="t" id="r8rk" style="top:532.00px;font-size:15.7px;color:#4c5259;left:960.50px;transform:scaleX(0.9618);transform-origin:0 0;">XII - Rekayasa Perangkat Lunak - A</span>
<span class="t" id="r8tt" style="top:532.00px;font-size:15.7px;color:#4c5259;right:502.60px;transform:scaleX(0.9430);transform-origin:100% 0;">300.000</span>
<span class="t" id="r8td" style="top:532.00px;font-size:15.7px;color:#4c5259;right:373.80px;">0</span>
<span class="t" id="r8st" style="top:532.00px;font-size:15.7px;color:#4c5259;right:245.00px;transform:scaleX(0.9430);transform-origin:100% 0;">300.000</span>
<span class="t" id="r8sp" style="top:532.00px;font-size:15.7px;color:#4c5259;left:1683.60px;transform:scaleX(0.9505);transform-origin:0 0;">Belum Lunas</span>
</div>
<div class="tr">
<div class="abs" style="left:166px;top:561px;width:1745px;height:44px;background:#fbfbfc"></div>
<div class="abs" style="left:166px;top:605px;width:1745px;height:1px;background:#dee2e6"></div>
<div class="cb" style="top:573px"></div>
<span class="t" id="r9inv" style="top:576.00px;font-size:15.7px;color:#4c5259;letter-spacing:0.135px;left:214.30px;">INV/2030/00001</span>
<span class="t" id="r9dt" style="top:576.00px;font-size:15.7px;color:#4c5259;letter-spacing:0.167px;left:390.00px;">20/01/2030</span>
<span class="t" id="r9nm" style="top:576.00px;font-size:15.7px;color:#4c5259;letter-spacing:-0.159px;left:490.50px;">Muhammad Rizky Ramadhan</span>
<span class="t" id="r9pr" style="top:576.00px;font-size:15.7px;color:#4c5259;left:783.80px;transform:scaleX(0.9583);transform-origin:0 0;">[004] Buku Paket</span>
<span class="t" id="r9rk" style="top:576.00px;font-size:15.7px;color:#4c5259;left:960.50px;transform:scaleX(0.9618);transform-origin:0 0;">XII - Rekayasa Perangkat Lunak - A</span>
<span class="t" id="r9tt" style="top:576.00px;font-size:15.7px;color:#4c5259;right:502.60px;transform:scaleX(0.9430);transform-origin:100% 0;">300.000</span>
<span class="t" id="r9td" style="top:576.00px;font-size:15.7px;color:#4c5259;right:373.80px;">0</span>
<span class="t" id="r9st" style="top:576.00px;font-size:15.7px;color:#4c5259;right:245.00px;transform:scaleX(0.9430);transform-origin:100% 0;">300.000</span>
<span class="t" id="r9sp" style="top:576.00px;font-size:15.7px;color:#4c5259;left:1683.60px;transform:scaleX(0.9505);transform-origin:0 0;">Belum Lunas</span>
</div>
<div class="tr">
<div class="abs" style="left:166px;top:606px;width:1745px;height:44px;background:#fff"></div>
<div class="abs" style="left:166px;top:650px;width:1745px;height:1px;background:#dee2e6"></div>
<div class="cb" style="top:618px"></div>
<span class="t" id="r10inv" style="top:621.00px;font-size:15.7px;color:#4c5259;letter-spacing:0.135px;left:214.30px;">INV/2029/00013</span>
<span class="t" id="r10dt" style="top:621.00px;font-size:15.7px;color:#4c5259;letter-spacing:0.167px;left:390.00px;">20/12/2029</span>
<span class="t" id="r10nm" style="top:621.00px;font-size:15.7px;color:#4c5259;letter-spacing:-0.159px;left:490.50px;">Muhammad Rizky Ramadhan</span>
<span class="t" id="r10pr" style="top:621.00px;font-size:15.7px;color:#4c5259;left:783.80px;transform:scaleX(0.9583);transform-origin:0 0;">[004] Buku Paket</span>
<span class="t" id="r10rk" style="top:621.00px;font-size:15.7px;color:#4c5259;left:960.50px;transform:scaleX(0.9618);transform-origin:0 0;">XII - Rekayasa Perangkat Lunak - A</span>
<span class="t" id="r10tt" style="top:621.00px;font-size:15.7px;color:#4c5259;right:502.60px;transform:scaleX(0.9430);transform-origin:100% 0;">300.000</span>
<span class="t" id="r10td" style="top:621.00px;font-size:15.7px;color:#4c5259;right:373.80px;">0</span>
<span class="t" id="r10st" style="top:621.00px;font-size:15.7px;color:#4c5259;right:245.00px;transform:scaleX(0.9430);transform-origin:100% 0;">300.000</span>
<span class="t" id="r10sp" style="top:621.00px;font-size:15.7px;color:#4c5259;left:1683.60px;transform:scaleX(0.9505);transform-origin:0 0;">Belum Lunas</span>
</div>
<div class="tr">
<div class="abs" style="left:166px;top:651px;width:1745px;height:44px;background:#fbfbfc"></div>
<div class="abs" style="left:166px;top:695px;width:1745px;height:1px;background:#dee2e6"></div>
<div class="cb" style="top:663px"></div>
<span class="t" id="r11inv" style="top:666.00px;font-size:15.7px;color:#4c5259;letter-spacing:0.135px;left:214.30px;">INV/2029/00014</span>
<span class="t" id="r11dt" style="top:666.00px;font-size:15.7px;color:#4c5259;letter-spacing:0.167px;left:390.00px;">20/12/2029</span>
<span class="t" id="r11nm" style="top:666.00px;font-size:15.7px;color:#4c5259;letter-spacing:-0.152px;left:490.50px;">Muhammad Bayu Firmansyah</span>
<span class="t" id="r11pr" style="top:666.00px;font-size:15.7px;color:#4c5259;left:783.80px;transform:scaleX(0.9583);transform-origin:0 0;">[004] Buku Paket</span>
<span class="t" id="r11rk" style="top:666.00px;font-size:15.7px;color:#4c5259;left:960.50px;transform:scaleX(0.9618);transform-origin:0 0;">XII - Rekayasa Perangkat Lunak - A</span>
<span class="t" id="r11tt" style="top:666.00px;font-size:15.7px;color:#4c5259;right:502.60px;transform:scaleX(0.9430);transform-origin:100% 0;">300.000</span>
<span class="t" id="r11td" style="top:666.00px;font-size:15.7px;color:#4c5259;right:373.80px;">0</span>
<span class="t" id="r11st" style="top:666.00px;font-size:15.7px;color:#4c5259;right:245.00px;transform:scaleX(0.9430);transform-origin:100% 0;">300.000</span>
<span class="t" id="r11sp" style="top:666.00px;font-size:15.7px;color:#4c5259;left:1683.60px;transform:scaleX(0.9505);transform-origin:0 0;">Belum Lunas</span>
</div>
<div class="tr">
<div class="abs" style="left:166px;top:696px;width:1745px;height:44px;background:#fff"></div>
<div class="abs" style="left:166px;top:740px;width:1745px;height:1px;background:#dee2e6"></div>
<div class="cb" style="top:708px"></div>
<span class="t" id="r12inv" style="top:711.00px;font-size:15.7px;color:#4c5259;letter-spacing:0.135px;left:214.30px;">INV/2029/00012</span>
<span class="t" id="r12dt" style="top:711.00px;font-size:15.7px;color:#4c5259;letter-spacing:0.167px;left:390.00px;">20/11/2029</span>
<span class="t" id="r12nm" style="top:711.00px;font-size:15.7px;color:#4c5259;letter-spacing:-0.152px;left:490.50px;">Muhammad Bayu Firmansyah</span>
<span class="t" id="r12pr" style="top:711.00px;font-size:15.7px;color:#4c5259;left:783.80px;transform:scaleX(0.9583);transform-origin:0 0;">[004] Buku Paket</span>
<span class="t" id="r12rk" style="top:711.00px;font-size:15.7px;color:#4c5259;left:960.50px;transform:scaleX(0.9618);transform-origin:0 0;">XII - Rekayasa Perangkat Lunak - A</span>
<span class="t" id="r12tt" style="top:711.00px;font-size:15.7px;color:#4c5259;right:502.60px;transform:scaleX(0.9430);transform-origin:100% 0;">300.000</span>
<span class="t" id="r12td" style="top:711.00px;font-size:15.7px;color:#4c5259;right:373.80px;">0</span>
<span class="t" id="r12st" style="top:711.00px;font-size:15.7px;color:#4c5259;right:245.00px;transform:scaleX(0.9430);transform-origin:100% 0;">300.000</span>
<span class="t" id="r12sp" style="top:711.00px;font-size:15.7px;color:#4c5259;left:1683.60px;transform:scaleX(0.9505);transform-origin:0 0;">Belum Lunas</span>
</div>
<div class="tr">
<div class="abs" style="left:166px;top:741px;width:1745px;height:44px;background:#fbfbfc"></div>
<div class="abs" style="left:166px;top:785px;width:1745px;height:1px;background:#dee2e6"></div>
<div class="cb" style="top:753px"></div>
<span class="t" id="r13inv" style="top:756.00px;font-size:15.7px;color:#4c5259;letter-spacing:0.135px;left:214.30px;">INV/2029/00011</span>
<span class="t" id="r13dt" style="top:756.00px;font-size:15.7px;color:#4c5259;letter-spacing:0.167px;left:390.00px;">20/11/2029</span>
<span class="t" id="r13nm" style="top:756.00px;font-size:15.7px;color:#4c5259;letter-spacing:-0.159px;left:490.50px;">Muhammad Rizky Ramadhan</span>
<span class="t" id="r13pr" style="top:756.00px;font-size:15.7px;color:#4c5259;left:783.80px;transform:scaleX(0.9583);transform-origin:0 0;">[004] Buku Paket</span>
<span class="t" id="r13rk" style="top:756.00px;font-size:15.7px;color:#4c5259;left:960.50px;transform:scaleX(0.9618);transform-origin:0 0;">XII - Rekayasa Perangkat Lunak - A</span>
<span class="t" id="r13tt" style="top:756.00px;font-size:15.7px;color:#4c5259;right:502.60px;transform:scaleX(0.9430);transform-origin:100% 0;">300.000</span>
<span class="t" id="r13td" style="top:756.00px;font-size:15.7px;color:#4c5259;right:373.80px;">0</span>
<span class="t" id="r13st" style="top:756.00px;font-size:15.7px;color:#4c5259;right:245.00px;transform:scaleX(0.9430);transform-origin:100% 0;">300.000</span>
<span class="t" id="r13sp" style="top:756.00px;font-size:15.7px;color:#4c5259;left:1683.60px;transform:scaleX(0.9505);transform-origin:0 0;">Belum Lunas</span>
</div>
<div class="tr">
<div class="abs" style="left:166px;top:786px;width:1745px;height:44px;background:#fff"></div>
<div class="abs" style="left:166px;top:830px;width:1745px;height:1px;background:#dee2e6"></div>
<div class="cb" style="top:798px"></div>
<span class="t" id="r14inv" style="top:801.00px;font-size:15.7px;color:#4c5259;letter-spacing:0.135px;left:214.30px;">INV/2029/00009</span>
<span class="t" id="r14dt" style="top:801.00px;font-size:15.7px;color:#4c5259;letter-spacing:0.167px;left:390.00px;">20/10/2029</span>
<span class="t" id="r14nm" style="top:801.00px;font-size:15.7px;color:#4c5259;letter-spacing:-0.159px;left:490.50px;">Muhammad Rizky Ramadhan</span>
<span class="t" id="r14pr" style="top:801.00px;font-size:15.7px;color:#4c5259;left:783.80px;transform:scaleX(0.9583);transform-origin:0 0;">[004] Buku Paket</span>
<span class="t" id="r14rk" style="top:801.00px;font-size:15.7px;color:#4c5259;left:960.50px;transform:scaleX(0.9618);transform-origin:0 0;">XII - Rekayasa Perangkat Lunak - A</span>
<span class="t" id="r14tt" style="top:801.00px;font-size:15.7px;color:#4c5259;right:502.60px;transform:scaleX(0.9430);transform-origin:100% 0;">300.000</span>
<span class="t" id="r14td" style="top:801.00px;font-size:15.7px;color:#4c5259;right:373.80px;">0</span>
<span class="t" id="r14st" style="top:801.00px;font-size:15.7px;color:#4c5259;right:245.00px;transform:scaleX(0.9430);transform-origin:100% 0;">300.000</span>
<span class="t" id="r14sp" style="top:801.00px;font-size:15.7px;color:#4c5259;left:1683.60px;transform:scaleX(0.9505);transform-origin:0 0;">Belum Lunas</span>
</div>
<div class="tr">
<div class="abs" style="left:166px;top:831px;width:1745px;height:44px;background:#fbfbfc"></div>
<div class="abs" style="left:166px;top:875px;width:1745px;height:1px;background:#dee2e6"></div>
<div class="cb" style="top:843px"></div>
<span class="t" id="r15inv" style="top:846.00px;font-size:15.7px;color:#4c5259;letter-spacing:0.135px;left:214.30px;">INV/2029/00010</span>
<span class="t" id="r15dt" style="top:846.00px;font-size:15.7px;color:#4c5259;letter-spacing:0.167px;left:390.00px;">20/10/2029</span>
<span class="t" id="r15nm" style="top:846.00px;font-size:15.7px;color:#4c5259;letter-spacing:-0.152px;left:490.50px;">Muhammad Bayu Firmansyah</span>
<span class="t" id="r15pr" style="top:846.00px;font-size:15.7px;color:#4c5259;left:783.80px;transform:scaleX(0.9583);transform-origin:0 0;">[004] Buku Paket</span>
<span class="t" id="r15rk" style="top:846.00px;font-size:15.7px;color:#4c5259;left:960.50px;transform:scaleX(0.9618);transform-origin:0 0;">XII - Rekayasa Perangkat Lunak - A</span>
<span class="t" id="r15tt" style="top:846.00px;font-size:15.7px;color:#4c5259;right:502.60px;transform:scaleX(0.9430);transform-origin:100% 0;">300.000</span>
<span class="t" id="r15td" style="top:846.00px;font-size:15.7px;color:#4c5259;right:373.80px;">0</span>
<span class="t" id="r15st" style="top:846.00px;font-size:15.7px;color:#4c5259;right:245.00px;transform:scaleX(0.9430);transform-origin:100% 0;">300.000</span>
<span class="t" id="r15sp" style="top:846.00px;font-size:15.7px;color:#4c5259;left:1683.60px;transform:scaleX(0.9505);transform-origin:0 0;">Belum Lunas</span>
</div>
<div class="tr">
<div class="abs" style="left:166px;top:876px;width:1745px;height:44px;background:#fff"></div>
<div class="abs" style="left:166px;top:920px;width:1745px;height:1px;background:#dee2e6"></div>
<div class="cb" style="top:888px"></div>
<span class="t" id="r16inv" style="top:891.00px;font-size:15.7px;color:#4c5259;letter-spacing:0.135px;left:214.30px;">INV/2029/00008</span>
<span class="t" id="r16dt" style="top:891.00px;font-size:15.7px;color:#4c5259;letter-spacing:0.167px;left:390.00px;">20/09/2029</span>
<span class="t" id="r16nm" style="top:891.00px;font-size:15.7px;color:#4c5259;letter-spacing:-0.152px;left:490.50px;">Muhammad Bayu Firmansyah</span>
<span class="t" id="r16pr" style="top:891.00px;font-size:15.7px;color:#4c5259;left:783.80px;transform:scaleX(0.9583);transform-origin:0 0;">[004] Buku Paket</span>
<span class="t" id="r16rk" style="top:891.00px;font-size:15.7px;color:#4c5259;left:960.50px;transform:scaleX(0.9618);transform-origin:0 0;">XII - Rekayasa Perangkat Lunak - A</span>
<span class="t" id="r16tt" style="top:891.00px;font-size:15.7px;color:#4c5259;right:502.60px;transform:scaleX(0.9430);transform-origin:100% 0;">300.000</span>
<span class="t" id="r16td" style="top:891.00px;font-size:15.7px;color:#4c5259;right:373.80px;">0</span>
<span class="t" id="r16st" style="top:891.00px;font-size:15.7px;color:#4c5259;right:245.00px;transform:scaleX(0.9430);transform-origin:100% 0;">300.000</span>
<span class="t" id="r16sp" style="top:891.00px;font-size:15.7px;color:#4c5259;left:1683.60px;transform:scaleX(0.9505);transform-origin:0 0;">Belum Lunas</span>
</div>
<div class="abs" style="left:1911px;top:115px;width:8px;height:299px;border-radius:5px;background:#888"></div>
<div class="abs" style="left:162px;top:112px;width:1756px;height:793px;border:solid #ff0000;border-width:3px 2px 2px 4px;border-top-left-radius:2px;pointer-events:none"></div>
<div class="abs" style="left:163px;top:111px;width:1755px;height:1px;background:rgba(255,0,0,.42)"></div>
</section>
</main>
</body>
</html>
